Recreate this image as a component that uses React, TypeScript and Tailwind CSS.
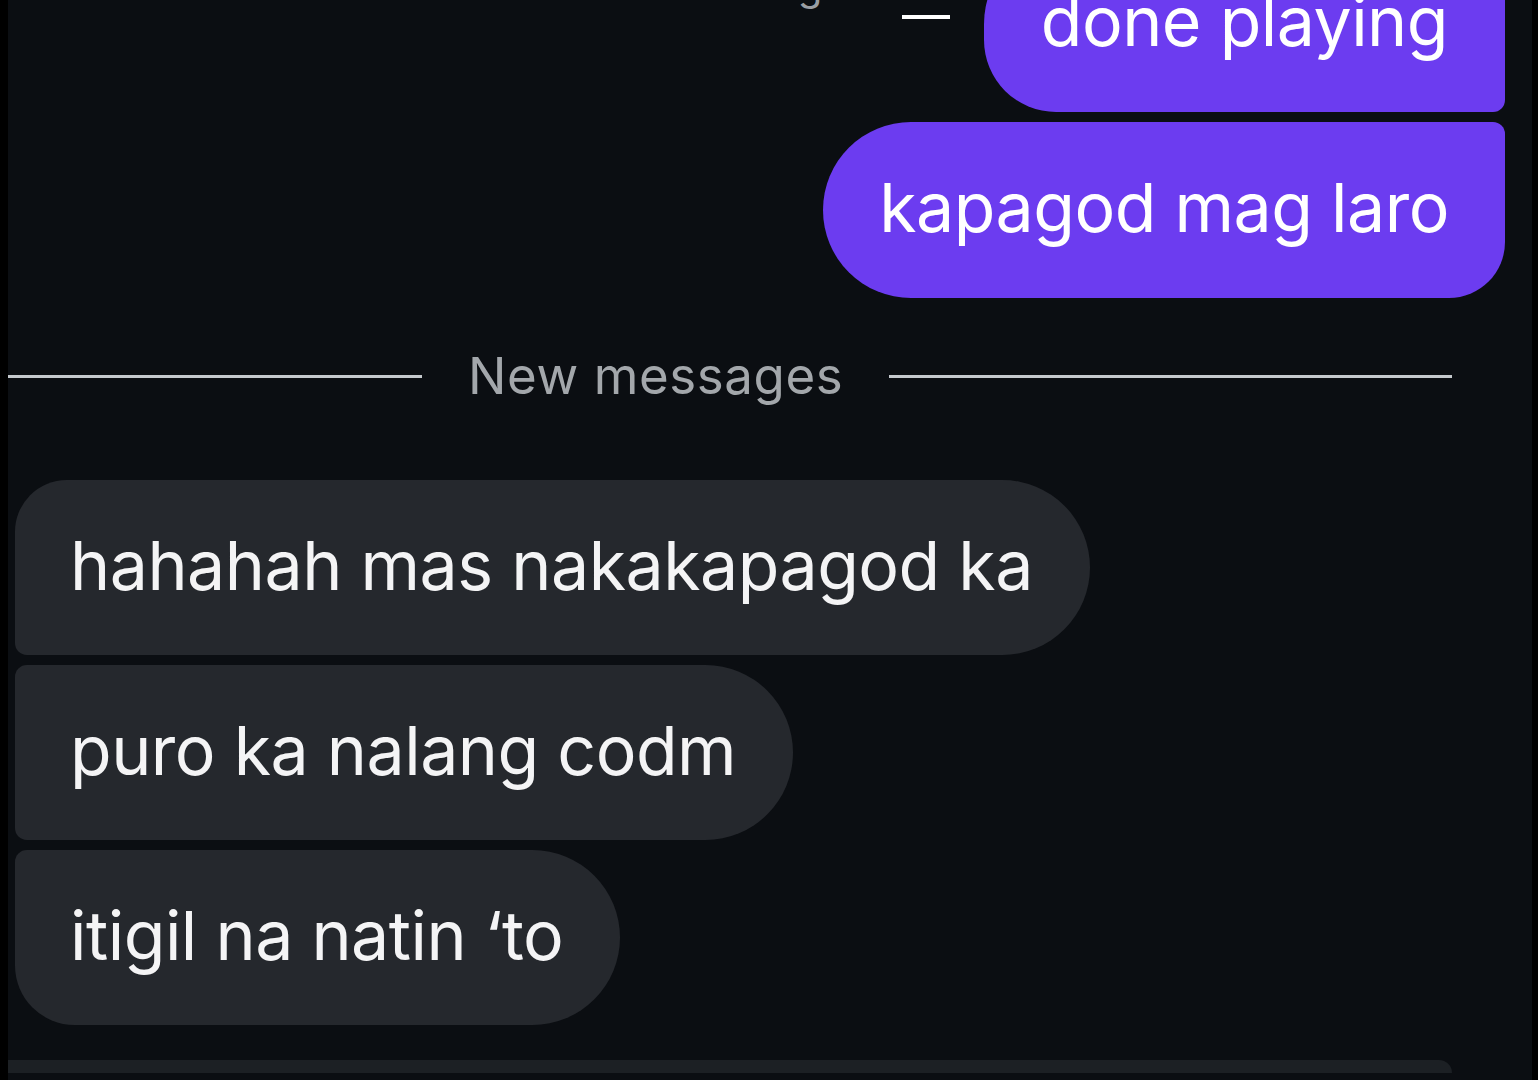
import React from "react";

const sent = [
  { text: "done playing", shape: "rounded-tl-[88px] rounded-tr-[12px] rounded-bl-[72px] rounded-br-[12px]" },
  { text: "kapagod mag laro", shape: "rounded-l-[88px] rounded-tr-[12px] rounded-br-[56px]" },
];

const received = [
  { text: "hahahah mas nakakapagod ka", shape: "rounded-tl-[52px] rounded-r-[88px] rounded-bl-[12px]" },
  { text: "puro ka nalang codm", shape: "rounded-l-[12px] rounded-r-[88px]" },
  { text: "itigil na natin ‘to", shape: "rounded-tl-[12px] rounded-r-[88px] rounded-bl-[60px]" },
];

export default function App() {
  return (
    <div
      className="h-[1080px] w-[1538px] overflow-hidden bg-black flex"
      style={{ fontFamily: "Inter, 'Noto Sans', sans-serif" }}
    >
      <div className="ml-[8px] mr-[6px] flex-1 bg-[#0b0e12] flex flex-col">
        {/* outgoing */}
        <div className="flex flex-col items-end gap-[10px] pr-[27px] -mt-[64px]">
          <div className="flex items-start gap-[34px] relative">
            <span className="absolute -left-[104px] top-[30px] text-[40px] leading-none text-[#9a9ea3]">g</span>
            <div className="mt-[79px] h-[4px] w-[48px] bg-white" />
            <div className={`h-[176px] px-[57px] pb-[6px] flex items-center bg-[#6c3cf0] text-white text-[68px] tracking-[-0.5px] ${sent[0].shape}`}>
              {sent[0].text}
            </div>
          </div>
          <div className={`h-[176px] px-[56px] pb-[6px] flex items-center bg-[#6c3cf0] text-white text-[68px] tracking-[-0.5px] ${sent[1].shape}`}>
            {sent[1].text}
          </div>
        </div>

        {/* divider */}
        <div className="mt-[52px] flex items-center pr-[80px] gap-[46px]">
          <div className="h-[3px] w-[414px] bg-[#c5c9cd]" />
          <span className="text-[51px] leading-none text-[#a3a7ab] tracking-[0.6px] pb-[2px]">New messages</span>
          <div className="h-[3px] flex-1 bg-[#c5c9cd]" />
        </div>

        {/* incoming */}
        <div className="mt-[77px] flex flex-col items-start gap-[10px] pl-[7px]">
          {received.map((m) => (
            <div
              key={m.text}
              className={`h-[175px] pl-[55px] pr-[57px] pb-[6px] flex items-center bg-[#25282d] text-[#f4f4f5] text-[68px] tracking-[-0.5px] ${m.shape}`}
            >
              {m.text}
            </div>
          ))}
        </div>

        <div className="mt-auto mb-[7px] h-[13px] mr-[80px] bg-[#1c2024] rounded-tr-[24px]" />
      </div>
    </div>
  );
}
